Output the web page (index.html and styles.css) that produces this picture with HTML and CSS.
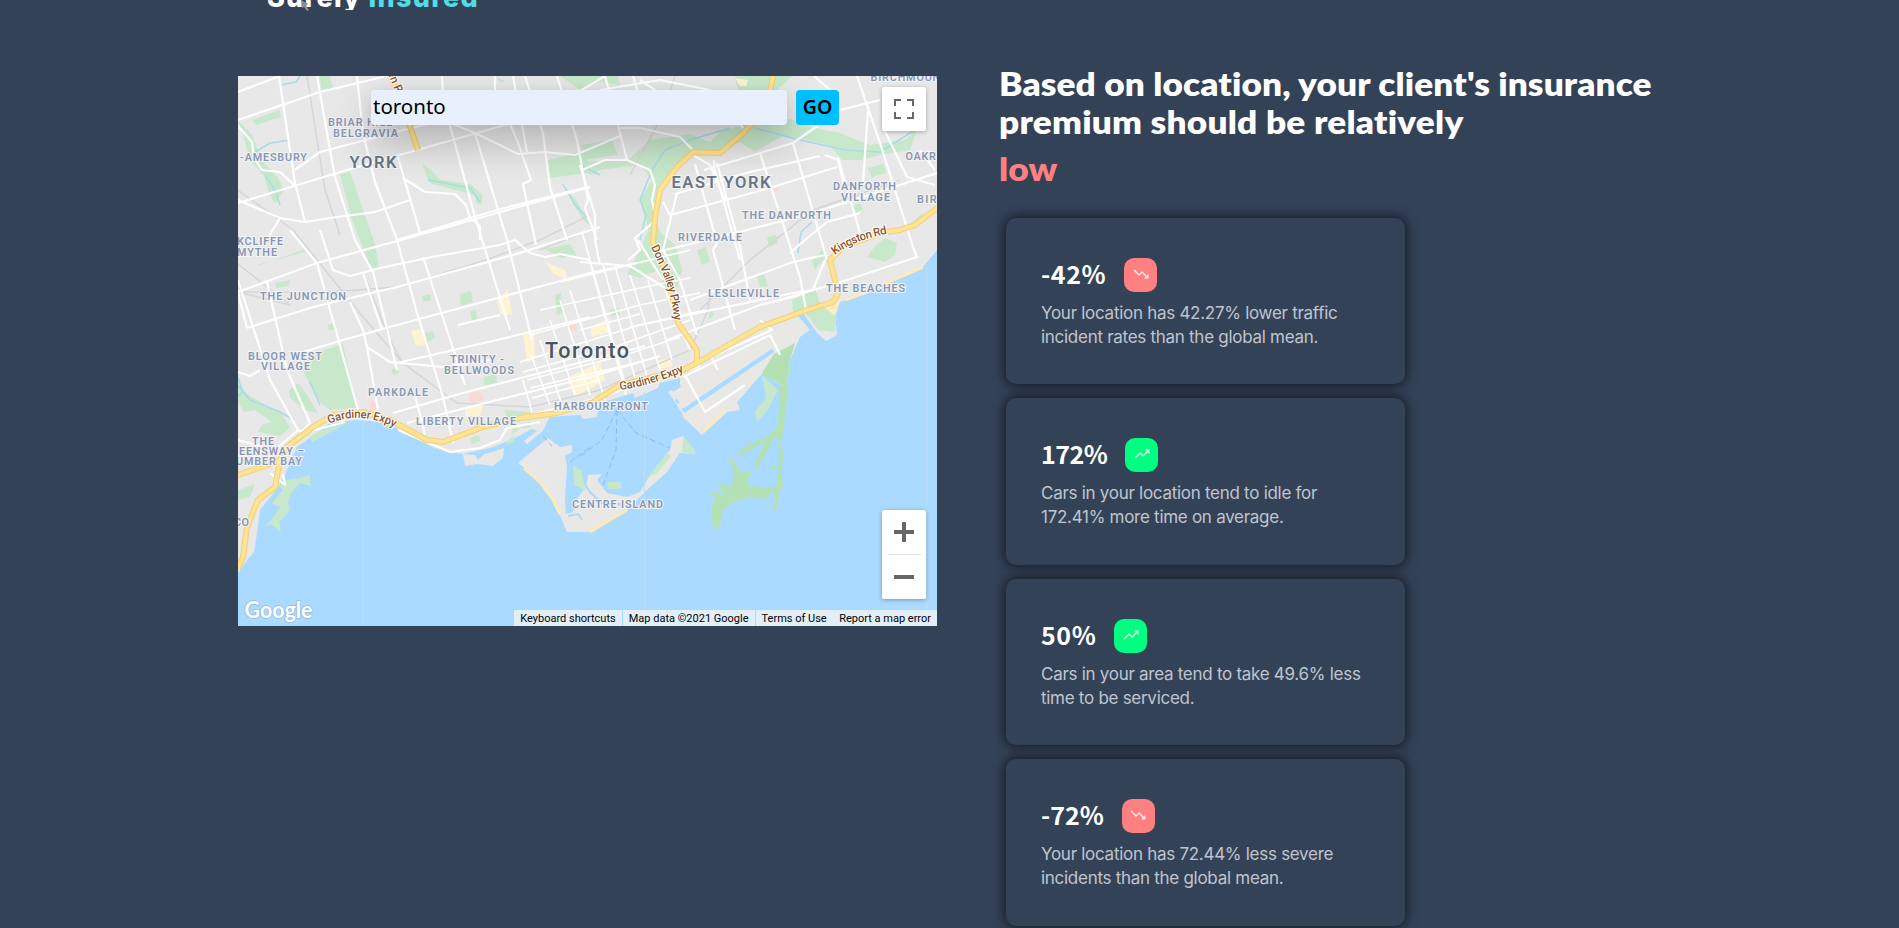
FILE: index.html
```html
<!DOCTYPE html>
<html lang="en">
<head>
<meta charset="utf-8">
<title>Surely Insured</title>
<link rel="stylesheet" href="styles.css">
</head>
<body>
<header class="brand"><div class="brand-clip"><span class="brand-name">Surely <em>Insured</em></span></div><svg class="cursor" width="12" height="12" viewBox="0 0 12 12"><path d="M1 0L8 4L6 6L9 10L7 11L4 7L2 8Z"/></svg></header>
<main class="layout">
<section class="map">
<svg class="map-canvas" viewBox="238 76 699 550" width="699" height="550">
<rect x="238" y="76" width="699" height="550" fill="#aadaff"/>
<path class="land" d="M238 76H937V250L923 267L913 273L890 283L867 293L840 302L835 317L837 335L826 341L817 333L803 313L798 316L810 330L800 337L790 360L787 387L767 377L762 373L737 402L740 410L727 412L702 435L683 417L682 413L668 392L680 386L680 378L660 383L658 388L635 398L633 393L600 403L597 417L583 419L580 415L550 417L546 424L543 431L527 444L524 441L537 431L532 429L517 437L503 443L490 448L463 454L447 452L430 445L407 433L383 422L357 420L330 423L310 438L297 447L290 463L284 477L276 490L268 500L260 510L256 540L254 552L247 560L238 573Z"/>
<path d="M683 411L773 350M676 402L690 393M672 390L680 385M744 361L755 349L765 351M743 359L728 369" stroke="#aadaff" stroke-width="5" fill="none"/>
<path fill="#e9e8e4" d="M683 417L702 435L727 412L737 402L765 370L773 355ZM672 393L695 378L745 352L790 325L803 320L800 337L773 348L684 408ZM463 454L475 455L478 460L484 454L492 452L504 448L503 458L493 466L477 464L465 466Z"/>
<path class="land" d="M518 463L548 438L560 447L572 445L572 452L565 456L567 467L565 500L567 532L552 497L540 480Z"/>
<path fill="#e9e8e4" d="M561 515L567 532H590L610 520L627 510L647 490L667 472L680 453L695 453L683 436L672 440L670 450L653 470L640 492L627 497L607 493L597 480L602 474L588 475L586 487L576 500L573 512Z"/>
<path d="M582 480L590 492L602 503L628 505M609 490L634 492L660 462L668 454M613 483L618 486L631 488M568 516L578 514L582 520" stroke="#aadaff" stroke-width="2" fill="none"/>
<path d="M524 468L540 482L552 498L560 514M590 532L610 520L627 510M704 431L717 418L724 412M845 300L867 292L895 279L923 267" stroke="#fdeabb" stroke-width="3" fill="none"/>
<path fill="#ffecc0" d="M840 300L834 318L828 326L822 320L825 307Z"/>
<g class="park">
<path d="M343 344L308 355L303 370L310 385L320 402L330 410L357 408Z"/>
<path d="M340 174L350 172L375 244L379 269L371 269L352 220Z"/>
<path d="M320 76L330 76L333 88L321 90ZM252 120L280 110L281 117L256 125ZM238 120L252 135L262 160L278 178L284 190L275 204L268 190L264 176L250 160L244 138Z"/>
<path d="M422 163L432 171L440 180L470 184L482 194L482 205L476 203L476 195L455 190L432 184L427 178Z"/>
<path d="M548 160L588 150V173L548 178ZM560 76H618L620 85L600 82L580 90ZM496 76L506 82H500ZM563 185L576 200L590 225L583 220Z"/>
<path d="M628 160L650 140L690 134L710 142L722 131L740 126L752 124L790 119L810 127L840 133L870 145L905 140L917 130L910 150L880 155L860 160L842 160L830 146L800 138L783 136L770 143L755 152L740 142L712 155L690 157L672 176L660 195L656 220L660 232L676 246L682 270L676 292L664 290L658 270L640 278L627 274L640 250L648 230L640 200L652 180L640 165L600 170L590 175L582 162Z"/>
<path d="M735 76H792L777 90L760 95L748 110L740 100ZM581 145L612 140L618 155L583 160Z"/>
<path d="M868 168L883 164L886 173L872 177ZM853 206L860 203L863 209L856 213ZM875 246L885 238L897 243L895 255L885 262L867 257ZM812 261L824 248L826 257L815 270ZM697 250L706 247L710 262L702 265ZM767 237L776 235L778 243L769 247ZM913 222L922 213L927 220L918 225Z"/>
<path d="M792 300L815 289L820 303L837 318L834 332L818 330L805 312L793 314ZM757 276L764 274L768 286L760 287ZM708 320L711 308L714 315Z"/>
<path fill="#b3e1b4" d="M795 343L790 360L787 387L767 377L762 373L774 354Z"/>
<path d="M762 375L778 390L768 410L757 422L755 412L766 398ZM683 436L695 450V454H682ZM573 465L581 470L586 491L574 485ZM647 478L667 453L671 456L657 473ZM607 482H620L622 488L608 490Z"/>
<path d="M238 385L250 396L267 406L282 414L290 428L280 436L258 432L262 425L272 422L255 410L244 412L238 402ZM289 390L298 383L307 395L318 413L305 410L290 398ZM310 475L300 478L285 480L278 486L283 490L272 503L280 507L270 522L264 526L272 525L281 532L279 522L290 510L288 502L293 490L300 483L311 486ZM238 490L255 484L250 497L238 500Z"/>
<path d="M310 436L323 430L350 422L312 442ZM410 435L440 447L450 453L435 449ZM512 428H530V421L517 430L505 445L514 442ZM505 410L530 412L528 420L506 418ZM460 294L471 291L473 302L461 306ZM470 311L476 310L477 319L472 321ZM425 333L433 331L435 337L427 343ZM555 295L561 293L563 312L557 315ZM484 377L496 374L497 383L484 385ZM391 370L397 367L399 373L393 375ZM422 296L430 294L431 300L423 302ZM470 438L479 435L480 441L472 444ZM275 283L290 280L288 286L276 288ZM328 325L334 323L335 329L329 330ZM610 310L619 308L620 315L612 316ZM545 249L570 244L577 256L560 258ZM258 266L305 249V252L260 264Z"/>
</g>
<path fill="#b3e1b4" d="M780 386L788 386L786 405L784 425L781 445L784 455L781 475L784 487L780 490L777 509L768 508L775 505L774 489L764 500L757 497L742 499L728 505L721 512L722 520L717 529H713L711 507L715 500L710 490L716 491L725 498L717 483L732 487L734 470L727 456L733 460L742 473L752 470L747 485L764 488L776 486L779 470L766 467L779 466L780 440L775 436L768 450L758 468H753L764 445L760 444L742 455L738 455L745 446L765 438L778 426Z"/>
<g class="sand">
<path d="M411 331L421 329L426 345L416 346ZM497 300L508 290L512 315L500 314ZM523 333L534 331L535 358L527 363ZM465 407L483 405L480 416L465 416ZM735 78L748 80L746 86L740 86ZM545 262L565 270L567 280L554 274ZM657 361L670 358L673 366L660 369ZM590 327L610 318L610 332L592 337ZM567 378L600 362L605 380L575 397ZM265 493L259 508L255 515Z"/>
<path fill="#fbd9d6" d="M468 394L480 391L484 400L470 403ZM370 402L376 401L377 413L370 413ZM567 322L575 320L577 331L568 330ZM771 186L778 185L779 193L772 192Z"/>
</g>
<path class="rail" d="M238 264L290 305L238 292H330L397 287L480 262L540 240L590 215M307 76L317 140L325 190L340 235M238 190L293 230L363 317L403 363L457 403L530 407L600 390L690 350L708 310L710 290M363 272L390 340L403 363M675 76L660 120L630 175M700 310L750 260L813 210L900 180M590 230L540 250"/>
<path class="stream" d="M238 378L243 392L238 396M238 385L250 400L268 407L280 412L294 420M310 382L320 405M428 180L470 188L480 202M255 152L270 143L290 140M265 175L275 190L280 205M563 184L575 205L585 215M640 240L646 215L640 200L652 170L665 150L690 140L730 128M755 128L800 140L845 150L880 152L915 130M798 253L801 232L812 222M280 85L296 82L300 76M600 175L580 165"/>
<g class="street">
<path d="M279 76L293 170L295 183L305 222M317 76L330 150L335 177L355 240L373 272L397 370M357 76L363 133L375 182L397 240L417 313L443 397L453 443M398 157L420 233M442 76L443 100L475 217L510 330M475 133L507 240L532 340M495 76V89L517 140L531 180L523 184L536 245M525 76L543 133L550 187L567 240M513 76L523 130L527 152M557 76L577 140L588 200L585 208L597 240"/>
<path d="M238 92L280 76M238 120L320 92L387 76M238 203L357 167L477 133L540 115L605 76M295 170L320 152L400 131L443 120L475 133L518 154L545 152L575 155L620 136M403 178L425 192L455 194L466 205L470 218L480 226V240M238 126L252 142L254 158L262 170L280 172L294 185M238 200L280 218L305 222L330 218L375 212L410 200M280 218L268 238"/>
<path d="M397 240L497 210L588 187"/>
<path d="M238 292L317 263L437 230L497 213L590 187M247 328L313 307L397 287L520 253L600 227M247 328L238 293M293 355L343 340L397 325L490 300L590 273L637 263M397 363L497 340L590 317M393 413L463 393L590 360L645 346M407 423L497 400L590 377L660 356M367 347L390 362L443 367L490 360"/>
<path d="M290 230L317 263L358 410M267 282L287 370L310 423M238 280L270 380L298 430L302 432M238 372L250 376L260 370M320 230L333 270L350 276L380 268L437 256L500 245L515 240L530 253L545 257L560 254L590 260M363 273L382 330M350 302L363 330L367 347L378 410M298 430L275 450L238 440M310 423L300 434L345 422M270 473L285 485L283 474M398 430L450 452L480 448L500 440L507 428L540 422M415 395L425 435M423 257L465 385M458 325L500 315"/>
<path d="M605 76L627 160M633 76L638 93L650 108M717 163L740 247L750 300M760 153L800 277L806 310M793 143L827 260M838 157L860 233M857 76L880 143L913 247L917 257L847 280L780 300M868 110L863 183M883 127L907 177L935 185M677 193L663 250L680 280L697 335M695 164L717 243L713 250L735 330M714 160V167L740 260M814 76L830 90M920 150L935 170M825 155L838 160L845 190"/>
<path d="M704 170L793 143L840 110L880 100M670 215L763 190L837 167M675 194L750 172L820 156M653 253L747 230L813 213L937 173M790 253L805 240L827 222L860 213M690 300L793 262L825 255M630 327L793 293L813 290L825 260M667 340L760 305L800 295M640 80L655 90L635 105M600 90L660 80L710 90L745 130M620 128H640L680 137L693 150M627 160L650 170L655 185L652 200L656 220L635 238L640 250L628 260M663 202L670 215M693 155L710 165L725 200M582 170L605 160L627 160M580 165L595 215V240L600 265M638 240L663 280M580 262L630 266L665 288"/>
<path d="M697 363L772 330L760 320M683 377L770 335M685 375L705 412L745 385M710 355L718 370M530 415L590 400L700 366M770 335L780 355"/>
</g>
<g class="street street-grid">
<path d="M582 232L624 380M590 262L626 395M603 265L637 385M615 266L648 380M630 275L660 370M648 280L672 360M665 290L690 350M570 290L605 400M560 300L590 395M550 320L575 395M540 340L562 405M531 355L550 405M523 380L532 412M560 282L690 250M540 310L640 288L690 278M530 335L640 305L700 293M520 362L640 325L705 310M523 372L620 345L690 320M527 380L625 355L680 337M530 388L640 362M532 398L600 380M580 330L640 314"/>
</g>
<defs><path id="h" d="M773 76L770 92L752 123L743 133L720 153L693 152L677 167L660 190L655 217L653 243L668 277L678 323L697 350L697 363L683 370L620 385L593 402L557 413L520 418L483 427L443 442L427 440L390 420L363 412L333 415L313 427L287 447L280 460L275 487L258 500L247 527L243 557L238 568M280 460L273 463L238 475M697 363L723 348L760 327L807 310L833 302L838 293L830 260L843 247L880 233L900 230L915 225L937 208M390 76L400 97L418 150"/></defs>
<use href="#h" class="hwy-edge"/>
<use href="#h" class="hwy"/>
<path d="M617 410L602 440L578 458M617 410L616 450L603 485M617 410L636 433L670 448M543 436L552 446M570 462L590 447" class="ferry"/>
<path d="M363.500 420V626M644.500 392V626M926.500 265V626" stroke="#b9def8" fill="none"/>
<g class="label">
<text x="328" y="126" textLength="64">BRIAR HILL</text><text x="333" y="136.500" textLength="65">BELGRAVIA</text><text x="240" y="161" textLength="67">-AMESBURY</text>
<text x="870.500" y="81" textLength="77">BIRCHMOUNT</text><text x="905.500" y="160" textLength="57">OAKRIDGE</text><text x="833" y="190" textLength="63">DANFORTH</text><text x="841" y="200.500" textLength="49">VILLAGE</text><text x="917" y="203" textLength="37">BIRCH</text><text x="742" y="219" textLength="89">THE DANFORTH</text><text x="678" y="241" textLength="64">RIVERDALE</text><text x="708" y="297" textLength="71">LESLIEVILLE</text><text x="826" y="292" textLength="79">THE BEACHES</text>
<text x="237" y="245" textLength="46">KCLIFFE</text><text x="237" y="255.500" textLength="40">MYTHE</text><text x="260" y="300" textLength="86">THE JUNCTION</text><text x="248" y="360" textLength="74">BLOOR WEST</text><text x="261" y="370" textLength="49">VILLAGE</text><text x="450" y="363" textLength="54">TRINITY -</text><text x="444" y="373.500" textLength="70">BELLWOODS</text><text x="368" y="396" textLength="60">PARKDALE</text><text x="416" y="425" textLength="100">LIBERTY VILLAGE</text><text x="554" y="410" textLength="94">HARBOURFRONT</text>
<text x="252" y="444.500" textLength="22">THE</text><text x="239" y="454.500" textLength="65">EENSWAY –</text><text x="236" y="465" textLength="66">UMBER BAY</text><text x="234" y="525.500" textLength="15">CO</text><text x="572" y="508" textLength="91">CENTRE ISLAND</text>
<g class="borough"><text x="349.500" y="168" textLength="47">YORK</text><text x="671.500" y="188" textLength="99">EAST YORK</text></g>
<text class="city" x="545" y="358" textLength="84">Toronto</text>
</g>
<defs><path id="p1" d="M329 424Q360 410 396 428"/><path id="p2" d="M620 390Q650 386 688 370"/><path id="p3" d="M651 247C664 275 672 290 675 328"/><path id="p4" d="M835 255Q855 239 892 233"/><path id="p5" d="M382 60L398 98"/></defs>
<g class="road-label"><text textLength="68"><textPath href="#p1">Gardiner Expy</textPath></text><text textLength="67"><textPath href="#p2">Gardiner Expy</textPath></text><text textLength="78"><textPath href="#p3">Don Valley Pkwy</textPath></text><text textLength="57"><textPath href="#p4">Kingston Rd</textPath></text><text><textPath href="#p5">Allen Rd</textPath></text></g>
<text class="google" x="244.500" y="618" textLength="68" lengthAdjust="spacingAndGlyphs">Google</text>
</svg>
<form class="search"><input class="search-field" value="toronto" aria-label="Location"><button class="search-go" type="button">GO</button></form>
<button class="control fullscreen" aria-label="Fullscreen"><svg width="20" height="20" viewBox="0 0 20 20"><path d="M1 7V1H7M13 1H19V7M19 13V19H13M7 19H1V13" fill="none" stroke="#666" stroke-width="2"/></svg></button>
<div class="control zoom"><svg width="20" height="20" viewBox="0 0 20 20"><path d="M0 10H20M10 0V20" stroke="#666" stroke-width="4"/></svg><i></i><svg width="20" height="20" viewBox="0 0 20 20"><path d="M0 10H20" stroke="#666" stroke-width="4"/></svg></div>
<div class="legal"><span>Keyboard shortcuts</span><span>Map data ©2021 Google</span><span class="joined">Terms of Use<b>Report a map error</b></span></div>
</section>
<section class="report">
<h1><span class="line-one">Based on location, your client's insurance</span><span class="line-two">premium should be relatively</span></h1>
<p class="verdict">low</p>
<div class="cards">
<article class="card"><div class="stat"><strong class="wide">-42%</strong><span class="trend down"><svg width="18" height="18" viewBox="0 0 24 24"><path d="M16 18l2.290-2.290-4.880-4.880-4 4L2 7.410 3.410 6l6 6 4-4 6.300 6.290L22 12v6z"/></svg></span></div><p>Your location has 42.27% lower traffic<br>incident rates than the global mean.</p></article>
<article class="card"><div class="stat"><strong class="narrow">172%</strong><span class="trend up"><svg width="18" height="18" viewBox="0 0 24 24"><path d="M16 6l2.290 2.290-4.880 4.880-4-4L2 16.590 3.410 18l6-6 4 4 6.300-6.290L22 12V6z"/></svg></span></div><p>Cars in your location tend to idle for<br>172.41% more time on average.</p></article>
<article class="card"><div class="stat"><strong class="wide">50%</strong><span class="trend up"><svg width="18" height="18" viewBox="0 0 24 24"><path d="M16 6l2.290 2.290-4.880 4.880-4-4L2 16.590 3.410 18l6-6 4 4 6.300-6.290L22 12V6z"/></svg></span></div><p>Cars in your area tend to take 49.6% less<br>time to be serviced.</p></article>
<article class="card"><div class="stat"><strong>-72%</strong><span class="trend down"><svg width="18" height="18" viewBox="0 0 24 24"><path d="M16 18l2.290-2.290-4.880-4.880-4 4L2 7.410 3.410 6l6 6 4-4 6.300 6.290L22 12v6z"/></svg></span></div><p>Your location has 72.44% less severe<br>incidents than the global mean.</p></article>
</div>
</section>
</main>
</body>
</html>
```
FILE: styles.css
```css
* { box-sizing: border-box; }
body { margin: 0; height: 928px; overflow: hidden; background: #344258; color: #fff; font-family: Inter, sans-serif; }
.brand { position: relative; height: 66px; padding-left: 267px; }
.brand-clip { height: 10px; overflow: hidden; display: flex; align-items: flex-end; }
.brand-name { font: 800 27px/34px Inter, sans-serif; white-space: pre; letter-spacing: 1.300px; margin-bottom: -5px; }
.brand-name em { font-style: normal; color: #54dbe3; }
.cursor { position: absolute; left: 300px; top: 0; fill: #8b8f93; }
.layout { display: flex; align-items: flex-start; padding-left: 238px; gap: 62px; }
.map { position: relative; width: 699px; height: 550px; margin-top: 10px; flex: none; overflow: hidden; }
.map-canvas { display: block; }
.land { fill: #e8e8e8; }
.park { fill: #c8e8cb; }
.sand { fill: #fef3d2; }
.rail { fill: none; stroke: #d3d6da; stroke-width: 1.500; }
.stream { fill: none; stroke: #a6dcea; stroke-width: 1.500; }
.street { fill: none; stroke: #fff; stroke-width: 2.200; stroke-linejoin: round; }
.street-grid { stroke-width: 1.600; }
.hwy-edge, .hwy { fill: none; stroke: #f7d071; stroke-width: 6; stroke-linejoin: round; }
.hwy { stroke: #fee496; stroke-width: 3.800; }
.ferry { fill: none; stroke: #8fbcf0; stroke-width: 1; stroke-dasharray: 6 3; }
.label { font: 600 10.800px Roboto, sans-serif; fill: #8796b3; stroke: #f4f4f4; stroke-width: 2px; paint-order: stroke; }
.borough { font-size: 16.500px; fill: #697487; }
.city { font-size: 21.500px; font-weight: 500; fill: #4b535f; }
.road-label { font: 500 11.500px Roboto, sans-serif; fill: #8a552c; stroke: #fff; stroke-width: 2px; paint-order: stroke; }
.google { font: 700 22.500px Lato, sans-serif; fill: #fff; stroke: #94b8d8; stroke-width: 1.500px; paint-order: stroke; }
.search { position: absolute; left: 133px; top: 14px; display: flex; gap: 9px; }
.search-field { width: 416px; height: 35px; border: 0; border-radius: 4px; padding: 0 2px 3px; background: #e8f0fe; color: #000; font: 20.500px "Noto Sans", sans-serif; box-shadow: 0 17px 38px rgba(0,0,0,.25), 0 2px 12px rgba(0,0,0,.06); }
.search-go { width: 43px; height: 35px; border: 0; border-radius: 4px; padding: 0 0 2px; background: #00bfff; color: #000; font: 600 19.500px "Noto Sans", sans-serif; }
.control { position: absolute; right: 11px; width: 44px; background: #fff; border: 0; border-radius: 2px; box-shadow: 0 1px 4px rgba(0,0,0,.3); display: flex; flex-direction: column; align-items: center; justify-content: center; }
.fullscreen { top: 11px; height: 44px; padding: 0; }
.zoom { top: 434px; height: 89px; gap: 12px; }
.zoom i { width: 33px; height: 1px; background: #e2e2e2; }
.legal { position: absolute; right: 0; bottom: 0; display: flex; gap: 1px; font: 11px/15px Roboto, sans-serif; color: #000; white-space: nowrap; }
.legal span { background: rgba(245,245,245,.75); padding: 1px 6px 0; }
.legal b { font-weight: 400; margin-left: 12.500px; }
.report { width: 700px; margin-top: -1.500px; }
h1, .verdict { font: 800 32px/38.500px Lato, sans-serif; letter-spacing: .100px; white-space: nowrap; transform: scaleX(1.1); transform-origin: 0 0; }
h1 { margin: 0; }
h1 span { display: block; }
.line-two { letter-spacing: .200px; }
.verdict { margin: 7px 0 0; line-height: 39px; color: #ff8080; }
.cards { padding: 30.500px 0 0 7px; display: grid; gap: 14px; }
.card { width: 399px; height: 166.400px; border-radius: 10px; padding: 38px 35px; background: #344258; box-shadow: 0 0 12px 2px rgba(0,0,0,.6); }
.stat { display: flex; align-items: center; gap: 18px; height: 38px; }
.stat strong { font: 700 25px/34px "Noto Sans CJK SC", sans-serif; margin-top: -4px; }
.stat .wide { letter-spacing: .600px; }
.stat .narrow { letter-spacing: -.500px; }
.trend { width: 33px; height: 34px; border-radius: 10px; display: flex; align-items: center; justify-content: center; }
.trend svg { fill: rgba(255,255,255,.8); margin-top: -2px; }
.down { background: #ff8080; }
.up { background: #00ff80; }
.card p { margin: 7px 0 0; font: 17px/24px Inter, sans-serif; letter-spacing: -.280px; color: #c0c5cd; white-space: nowrap; }
```
